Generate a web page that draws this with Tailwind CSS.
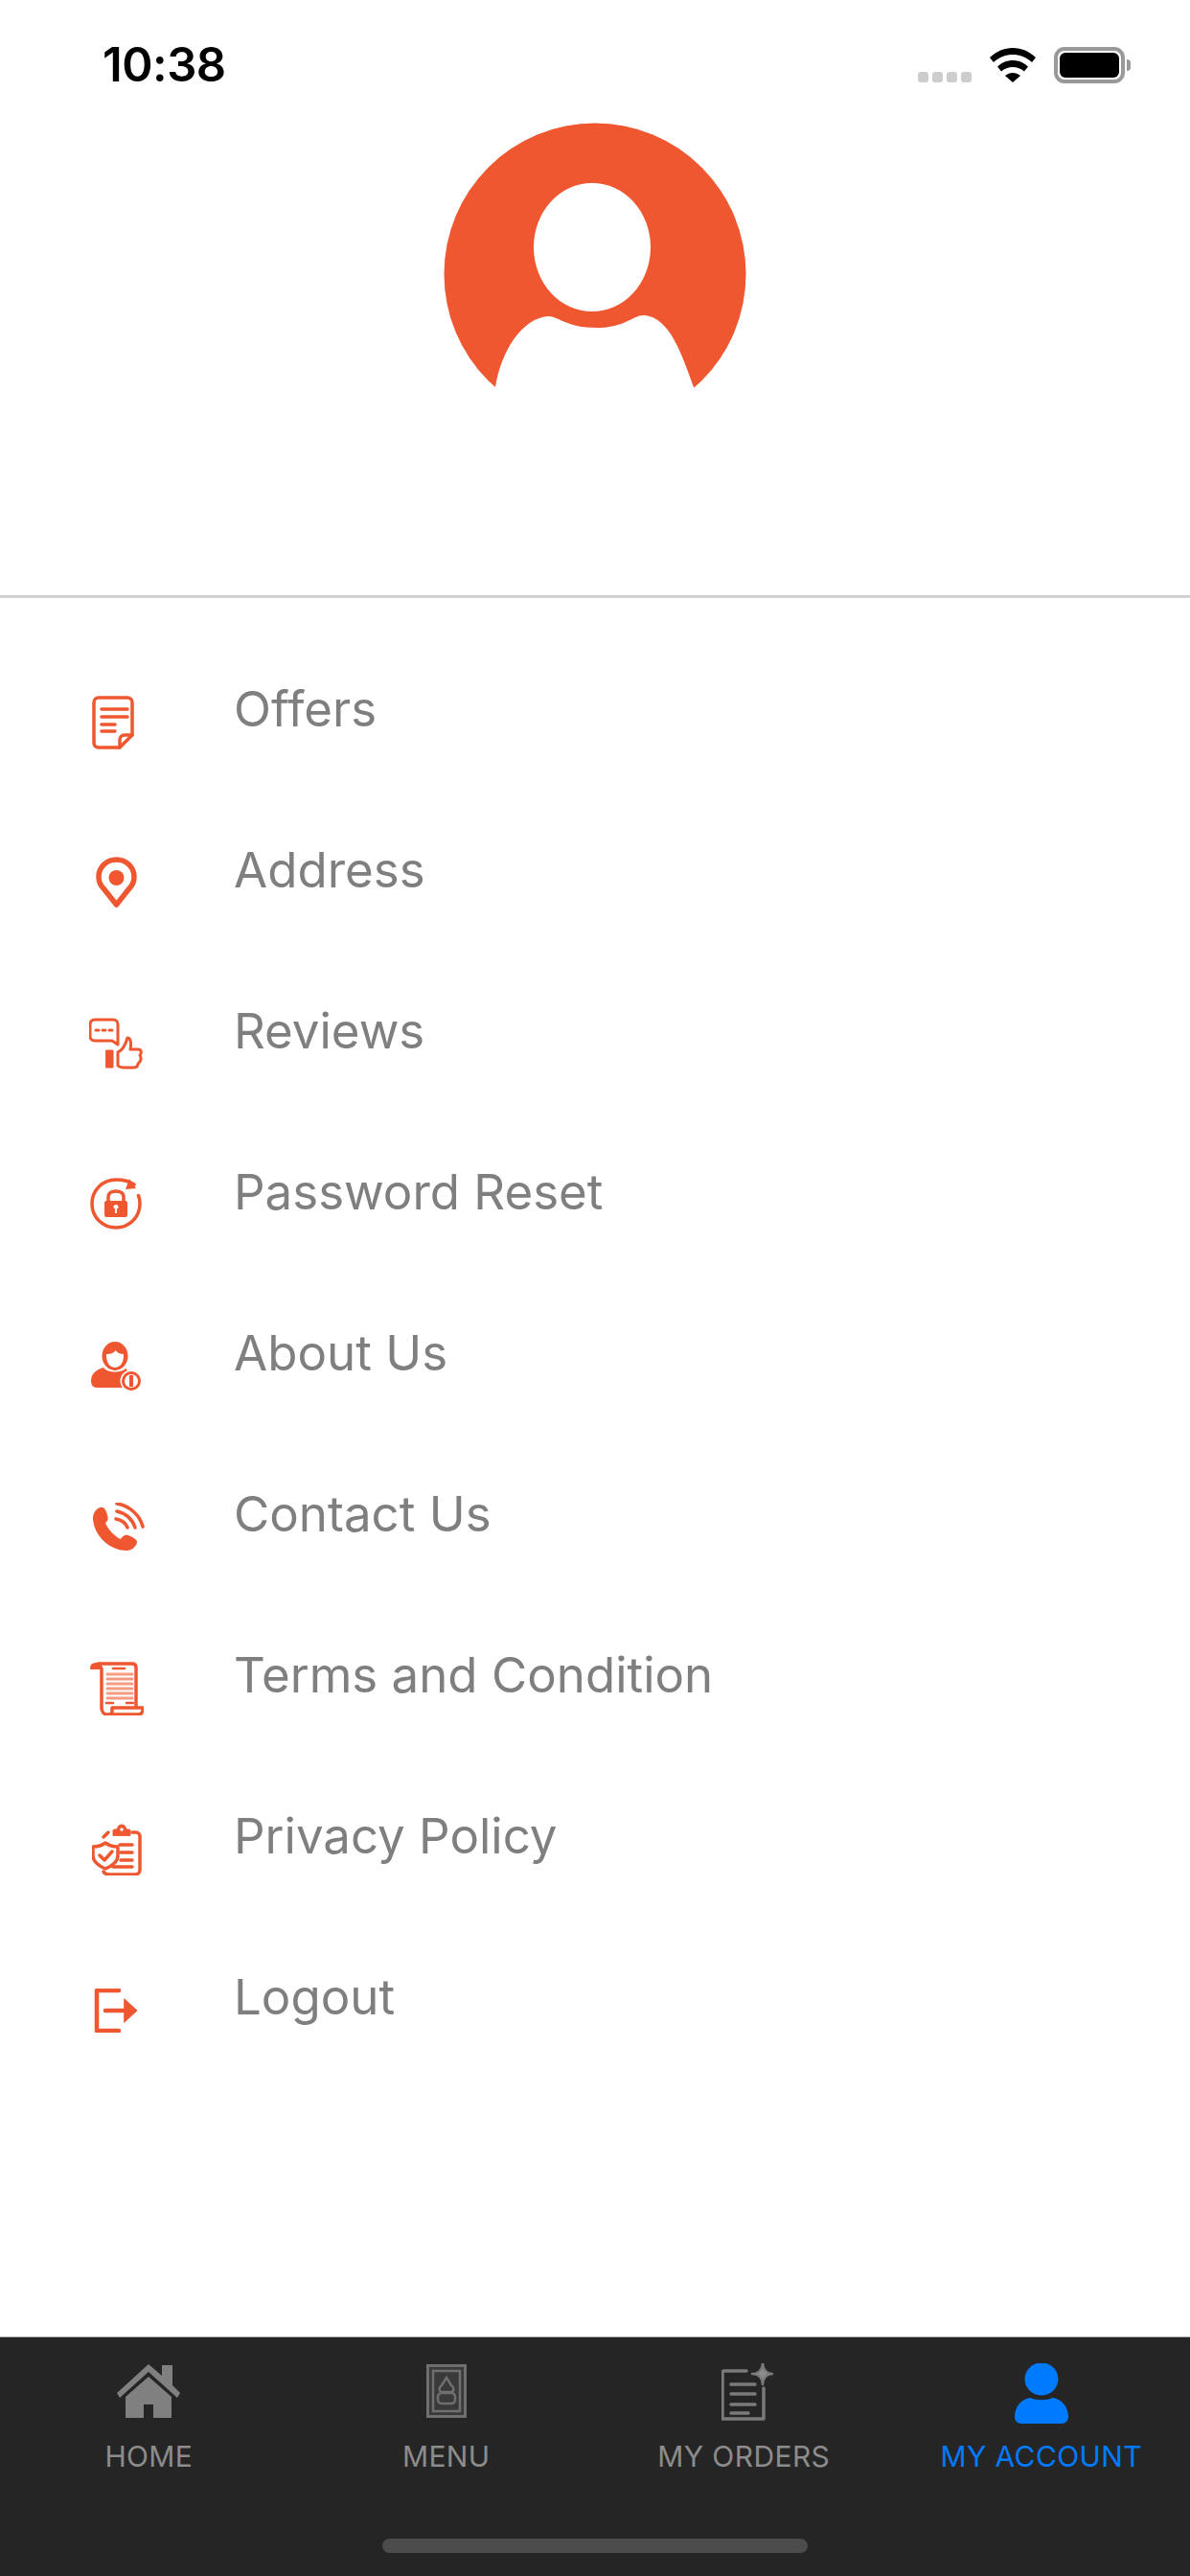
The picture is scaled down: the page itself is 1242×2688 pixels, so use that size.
<!DOCTYPE html>
<html>
<head>
<meta charset="utf-8">
<script src="https://cdn.jsdelivr.net/npm/@tailwindcss/browser@4"></script>
</head>
<body class="bg-white">
<div class="w-[1242px] h-[2688px] flex flex-col bg-white font-['Inter','Liberation_Sans',sans-serif] overflow-hidden">

  <!-- status bar -->
  <div class="h-[128px] shrink-0 flex items-start justify-between pt-[43px] pl-[107px] pr-[62px]">
    <span class="text-[49px] leading-[50px] font-semibold text-black tracking-[-0.5px]">10:38</span>
    <div class="flex items-start">
      <div class="flex gap-[4px] mt-[32px]">
        <div class="w-[11px] h-[11px] rounded-[3px] bg-[#cdcdcd]"></div>
        <div class="w-[11px] h-[11px] rounded-[3px] bg-[#cdcdcd]"></div>
        <div class="w-[11px] h-[11px] rounded-[3px] bg-[#cdcdcd]"></div>
        <div class="w-[11px] h-[11px] rounded-[3px] bg-[#cdcdcd]"></div>
      </div>
      <svg class="ml-[19px] mt-[7px]" width="48" height="36" viewBox="0 0 48 36">
        <path d="M24 0C15 0 7 3.500 0 10L4 15C10 9.500 17 7 24 7S38 9.500 44 15L48 10C41 3.500 33 0 24 0Z" fill="#000"/>
        <path d="M24 13C18 13 13 15 8 19.500L12 24.500C15.500 21.500 19.500 20 24 20S32.500 21.500 36 24.500L40 19.500C35 15 30 13 24 13Z" fill="#000"/>
        <path d="M24 26C21 26 18.500 27 16 29L24 36L32 29C29.500 27 27 26 24 26Z" fill="#000"/>
      </svg>
      <div class="ml-[19px] mt-[6px] w-[74px] h-[38px] rounded-[11px] border-[4px] border-[#999999] p-[2px]">
        <div class="w-full h-full rounded-[6px] bg-black"></div>
      </div>
      <div class="mt-[19px] ml-[2px] w-[4px] h-[12px] rounded-r-[4px] bg-[#999999]"></div>
    </div>
  </div>

  <!-- avatar -->
  <div class="h-[493px] shrink-0 flex justify-center">
    <svg width="320" height="320" viewBox="0 0 320 320">
      <circle cx="160" cy="158" r="157.500" fill="#ee5730"/>
      <ellipse cx="157" cy="130" rx="61" ry="67" fill="#fff"/>
      <path d="M56 276C62 238 84 204 111 202C122 202 130 214 162 214C192 214 200 200 212 201C238 204 250 240 263 276L263 320L56 320Z" fill="#fff"/>
    </svg>
  </div>
  <div class="h-[3px] shrink-0 bg-[#d2d2d2]"></div>

  <!-- list -->
  <div class="flex-1 flex flex-col pt-[32px]">

    <div class="h-[168px] flex items-start text-[#7f7f7f]">
      <div class="w-[244px] shrink-0 pl-[96px] pt-[70px]">
        <svg class="blur-[0.6px]" width="44" height="56" viewBox="0 0 44 56" fill="none" stroke="#ee5730" stroke-width="3.500" stroke-linecap="round" stroke-linejoin="round">
          <path d="M29 54H7C4 54 2 52 2 49V7C2 4 4 2 7 2H37C40 2 42 4 42 7V41L29 54Z"/>
          <path d="M29 54V46C29 43 31 41 34 41H42"/>
          <path d="M10 14H37M10 22H37M10 30H24M10 37H24"/>
        </svg>
      </div>
      <span class="text-[51px] leading-[64px] mt-[52px]">Offers</span>
    </div>

    <div class="h-[168px] flex items-start text-[#7f7f7f]">
      <div class="w-[244px] shrink-0 pl-[100px] pt-[70px]">
        <svg class="blur-[0.6px]" width="43" height="54" viewBox="0 0 43 54">
          <path d="M21.500 3C11 3 3 11 3 21C3 26 5 30 8 33L21.500 50L35 33C38 30 40 26 40 21C40 11 32 3 21.500 3Z" fill="none" stroke="#ee5730" stroke-width="5.500" stroke-linejoin="round"/>
          <circle cx="21.500" cy="22" r="8" fill="#ee5730"/>
        </svg>
      </div>
      <span class="text-[51px] leading-[64px] mt-[52px]">Address</span>
    </div>

    <div class="h-[168px] flex items-start text-[#7f7f7f]">
      <div class="w-[244px] shrink-0 pl-[93px] pt-[70px]">
        <svg class="blur-[0.6px]" width="56" height="54" viewBox="0 0 56 54" fill="none" stroke="#ee5730" stroke-width="3" stroke-linecap="round" stroke-linejoin="round">
          <path d="M6 2H25C28 2 30 4 30 7V28L24 24H6C3 24 1 22 1 19V7C1 4 3 2 6 2Z"/>
          <path d="M7 13H10M14 13H17M21 13H24" stroke-width="3"/>
          <rect x="18" y="34" width="7" height="18" fill="#ee5730" stroke-width="1"/>
          <path d="M30 36C35 34 38 28 40 21C44 21 44 28 43 33H51C55 33 55 37 53 39C55 42 54 46 51 48C51 51 49 52 46 52H37C33 52 31 51 30 50Z"/>
        </svg>
      </div>
      <span class="text-[51px] leading-[64px] mt-[52px]">Reviews</span>
    </div>

    <div class="h-[168px] flex items-start text-[#7f7f7f]">
      <div class="w-[244px] shrink-0 pl-[94px] pt-[69px]">
        <svg class="blur-[0.6px]" width="54" height="54" viewBox="0 0 54 54">
          <path d="M46 7C41 3.500 34 2 27 2C13 2 2 13 2 27S13 52 27 52S52 41 52 27C52 24 51.500 21 50.500 18.500" fill="none" stroke="#ee5730" stroke-width="3.500" stroke-linecap="round"/>
          <path d="M41 1L48 11L37 12Z" fill="#ee5730"/>
          <path d="M19 25V20C19 16 22.500 14 27 14S35 16 35 20V25" fill="none" stroke="#ee5730" stroke-width="3.500"/>
          <path d="M17 24H37C38 24 39 25 39 26V39C39 40 38 41 37 41H17C16 41 15 40 15 39V26C15 25 16 24 17 24Z" fill="#ee5730"/>
          <path d="M27 28C25.500 28 24.500 29 24.500 30.500C24.500 31.500 25 32 26 32.500V37H28V32.500C29 32 29.500 31.500 29.500 30.500C29.500 29 28.500 28 27 28Z" fill="#fff"/>
        </svg>
      </div>
      <span class="text-[51px] leading-[64px] mt-[52px]">Password Reset</span>
    </div>

    <div class="h-[168px] flex items-start text-[#7f7f7f]">
      <div class="w-[244px] shrink-0 pl-[95px] pt-[72px]">
        <svg class="blur-[0.6px]" width="54" height="52" viewBox="0 0 54 52">
          <ellipse cx="25" cy="15" rx="13.500" ry="15" fill="#ee5730"/>
          <path d="M16 13C20 13 24 12 25.500 9C28 12 31 13 34 13C34.500 22 30 27 25 27C20 27 15.500 22 16 13Z" fill="#fff"/>
          <path d="M13 27C7 29 0 32 0 41C0 45 2 48 6 48H36L42 34C37 30 36 28 37 27C33 33 17 33 13 27Z" fill="#ee5730"/>
          <circle cx="42" cy="41" r="11.500" fill="#fff"/>
          <circle cx="42" cy="41" r="8.500" fill="#fff" stroke="#ee5730" stroke-width="3"/>
          <rect x="40" y="35" width="4" height="12" fill="#ee5730"/>
        </svg>
      </div>
      <span class="text-[51px] leading-[64px] mt-[52px]">About Us</span>
    </div>

    <div class="h-[168px] flex items-start text-[#7f7f7f]">
      <div class="w-[244px] shrink-0 pl-[97px] pt-[72px]">
        <svg class="blur-[0.6px]" width="54" height="51" viewBox="0 0 54 51">
          <path d="M8 5C3 6 0 11 0 17C1 33 16 50 35 50C41 50 46 45 46 41C46 38 41 36 37 34C33 33 31 35 29 38C23 36 15 27 13 21C16 19 16 16 15 13C14 9 12 4 8 5Z" fill="#ee5730"/>
          <path d="M25 1C38 3 49 13 52 25M25 9C34 11 41 17 44 26M24 17C30 18 34 21 36 26" fill="none" stroke="#ee5730" stroke-width="3.500" stroke-linecap="round"/>
        </svg>
      </div>
      <span class="text-[51px] leading-[64px] mt-[52px]">Contact Us</span>
    </div>

    <div class="h-[168px] flex items-start text-[#7f7f7f]">
      <div class="w-[244px] shrink-0 pl-[94px] pt-[70px]">
        <svg class="blur-[0.6px]" width="56" height="56" viewBox="0 0 56 56" fill="none" stroke="#ee5730" stroke-linecap="round" stroke-linejoin="round">
          <path d="M8 2H44C47 2 48 4 48 6V47" stroke-width="3.500"/>
          <path d="M1 7C1 4 3 2 6 2C10 2 12 4 12 7Z" fill="#ee5730" stroke-width="2"/>
          <path d="M12 7V48C12 52 14 55 18 55H50C53 55 55 53 55 50V48H23V52C23 54 21 55 19 55" stroke-width="3.500"/>
          <path d="M24 7H36" stroke-width="2.500"/>
          <path d="M18 13H44M18 18H44M18 23H44M18 28H44M18 33H44M18 38H44" stroke-width="3" stroke="#f69a80"/>
          <path d="M17 43H24M38 43H45" stroke-width="2.500"/>
        </svg>
      </div>
      <span class="text-[51px] leading-[64px] mt-[52px]">Terms and Condition</span>
    </div>

    <div class="h-[168px] flex items-start text-[#7f7f7f]">
      <div class="w-[244px] shrink-0 pl-[96px] pt-[71px]">
        <svg class="blur-[0.6px]" width="52" height="54" viewBox="0 0 52 54" fill="none" stroke="#ee5730" stroke-linecap="round" stroke-linejoin="round">
          <path d="M22 12V7C22 6 23 6 24 6H26C27 2 29 1 31 1S35 2 36 6H38C39 6 40 6 40 7V12Z" fill="#ee5730" stroke-width="1"/>
          <circle cx="31" cy="6" r="1.800" fill="#fff" stroke="none"/>
          <path d="M12 14L17 9" stroke-width="3.500"/>
          <path d="M42 9H46C48 9 50 11 50 13V48C50 51 48 53 45 53H18C15 53 13 52 12 50" stroke-width="3.500"/>
          <path d="M29 22H42M30 30H42M30 38H42M22 45H42" stroke-width="3.500"/>
          <path d="M14 20C10 23 6 24 1 24V33C1 39 7 44 14 47C21 44 27 39 27 33V24C22 24 18 23 14 20Z" stroke-width="3.500"/>
          <path d="M8 33L13 38L21 29" stroke-width="3.500"/>
        </svg>
      </div>
      <span class="text-[51px] leading-[64px] mt-[52px]">Privacy Policy</span>
    </div>

    <div class="h-[168px] flex items-start text-[#7f7f7f]">
      <div class="w-[244px] shrink-0 pl-[98px] pt-[75px]">
        <svg class="blur-[0.6px]" width="46" height="46" viewBox="0 0 46 46" fill="none" stroke="#ee5730" stroke-linecap="round" stroke-linejoin="round">
          <path d="M26 2H3V44H26" stroke-width="4.500"/>
          <path d="M12 23H32" stroke-width="4.500"/>
          <path d="M32 11L45 23L32 35Z" fill="#ee5730" stroke-width="1"/>
        </svg>
      </div>
      <span class="text-[51px] leading-[64px] mt-[52px]">Logout</span>
    </div>
  </div>

  <!-- tab bar -->
  <div class="h-[250px] shrink-0 bg-[#252525] border-t border-[#b0b0b0] relative">
    <div class="grid grid-cols-4 pt-[22px]">

      <div class="flex flex-col items-center">
        <div class="h-[62px] flex items-end">
          <svg class="blur-[0.5px]" width="66" height="56" viewBox="0 0 66 56">
            <path d="M33 0L47 12V1H58V22L66 30L63 35L33 8L3 35L0 30Z" fill="#808080"/>
            <path d="M33 13L57 34V56H38V42H28V56H9V34Z" fill="#808080"/>
          </svg>
        </div>
        <span class="mt-[22px] text-[30px] leading-[36px] tracking-[0.3px] text-[#8c8c8c]">HOME</span>
      </div>

      <div class="flex flex-col items-center">
        <div class="h-[62px] flex items-end">
          <svg class="blur-[0.5px]" width="42" height="56" viewBox="0 0 42 56" fill="none" stroke="#6f6f6f">
            <rect x="1.500" y="1.500" width="39" height="53" stroke-width="3" fill="#3a3a3a"/>
            <rect x="7" y="7" width="28" height="42" stroke-width="2.500"/>
            <path d="M21 14L26 22C29 24 29 27 27 29H15C13 27 13 24 16 22Z" stroke-width="2.500"/>
            <rect x="12" y="30" width="18" height="11" rx="4" stroke-width="2.500"/>
          </svg>
        </div>
        <span class="mt-[22px] text-[30px] leading-[36px] tracking-[0.3px] text-[#8c8c8c]">MENU</span>
      </div>

      <div class="flex flex-col items-center">
        <div class="h-[62px] flex items-end pl-[8px]">
          <svg class="blur-[0.5px] mb-[-3px]" width="54" height="60" viewBox="0 0 54 60" fill="none" stroke="#7a7a7a" stroke-linecap="round" stroke-linejoin="round">
            <path d="M43 0C43 6 47 11 54 11C47 11 43 16 43 22C43 16 39 11 32 11C39 11 43 6 43 0Z" fill="#8c8c8c" stroke-width="2.500"/>
            <path d="M26 8H3C1.500 8 1 9 1 10V58H44V26" stroke-width="3.500"/>
            <path d="M10 22H35M10 32H35M10 43H35M10 52H28" stroke-width="3.500"/>
          </svg>
        </div>
        <span class="mt-[22px] text-[30px] leading-[36px] tracking-[0.4px] text-[#8c8c8c]">MY ORDERS</span>
      </div>

      <div class="flex flex-col items-center">
        <div class="h-[62px] flex items-end">
          <svg class="mb-[-6px]" width="56" height="63" viewBox="0 0 56 63">
            <ellipse cx="28" cy="16.500" rx="17.500" ry="17" fill="#007aff"/>
            <path d="M16 36C6 38 0 46 0 56C0 60 3 63 7 63H49C53 63 56 60 56 56C56 46 50 38 40 36C33 39 23 39 16 36Z" fill="#007aff"/>
          </svg>
        </div>
        <span class="mt-[22px] text-[30px] leading-[36px] tracking-[0.4px] text-[#007aff]">MY ACCOUNT</span>
      </div>
    </div>

    <div class="absolute left-[399px] top-[210px] w-[444px] h-[15px] rounded-full bg-[#4c4c4c]"></div>
  </div>
</div>
</body>
</html>
